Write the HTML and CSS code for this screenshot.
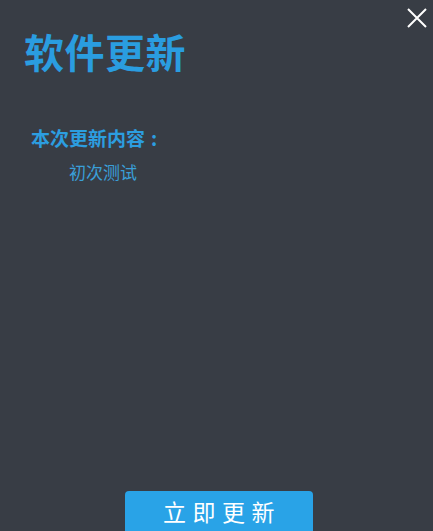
FILE: index.html
```
<!DOCTYPE html>
<html lang="zh">
<head>
<meta charset="utf-8">
<link rel="stylesheet" href="styles.css">
</head>
<body>
<div class="win">
  <button class="close" aria-label="关闭">
    <svg width="20" height="20" viewBox="0 0 20 20"><path d="M1 1L19 19M19 1L1 19" stroke="#fff" stroke-width="2" fill="none"/></svg>
  </button>
  <h1 class="title">软件更新</h1>
  <div class="notes">
    <div class="notes-head">本次更新内容<span class="colon">:</span></div>
    <div class="notes-body">初次测试</div>
  </div>
  <div class="spacer"></div>
  <div class="actions">
    <button class="update">立即更新</button>
  </div>
</div>
</body>
</html>
```
FILE: styles.css
```
html, body {
  margin: 0;
  padding: 0;
  background: #383d45;
}
.win {
  position: relative;
  width: 433px;
  height: 531px;
  overflow: hidden;
  display: flex;
  flex-direction: column;
  font-family: "Noto Sans CJK SC", "Noto Sans", sans-serif;
  box-sizing: border-box;
}
.close {
  position: absolute;
  top: 8px;
  right: 6px;
  width: 20px;
  height: 20px;
  padding: 0;
  border: 0;
  background: none;
  display: flex;
}
.title {
  margin: 24px 0 0 24px;
  font-size: 40px;
  line-height: 54px;
  font-weight: 700;
  color: #2a9de0;
  letter-spacing: 0.5px;
}
.notes {
  margin: 48px 0 0 31px;
}
.notes-head {
  font-size: 19px;
  line-height: 24px;
  font-weight: 700;
  color: #2c9ee0;
}
.colon {
  margin-left: 6px;
}
.notes-body {
  margin: 10px 0 0 38px;
  font-size: 17px;
  line-height: 24px;
  color: #3a9fd8;
}
.spacer { flex: 1; }
.actions {
  display: flex;
  justify-content: flex-start;
  padding-left: 125px;
  margin-bottom: -10px;
}
.update {
  width: 188px;
  height: 50px;
  border: 0;
  border-radius: 4px;
  background: #29a3e7;
  color: #fff;
  font-family: "Noto Sans CJK SC", "Noto Sans", sans-serif;
  font-size: 23px;
  letter-spacing: 6.5px;
  padding: 0 0 10px 6px;
  line-height: 40px;
}
```
